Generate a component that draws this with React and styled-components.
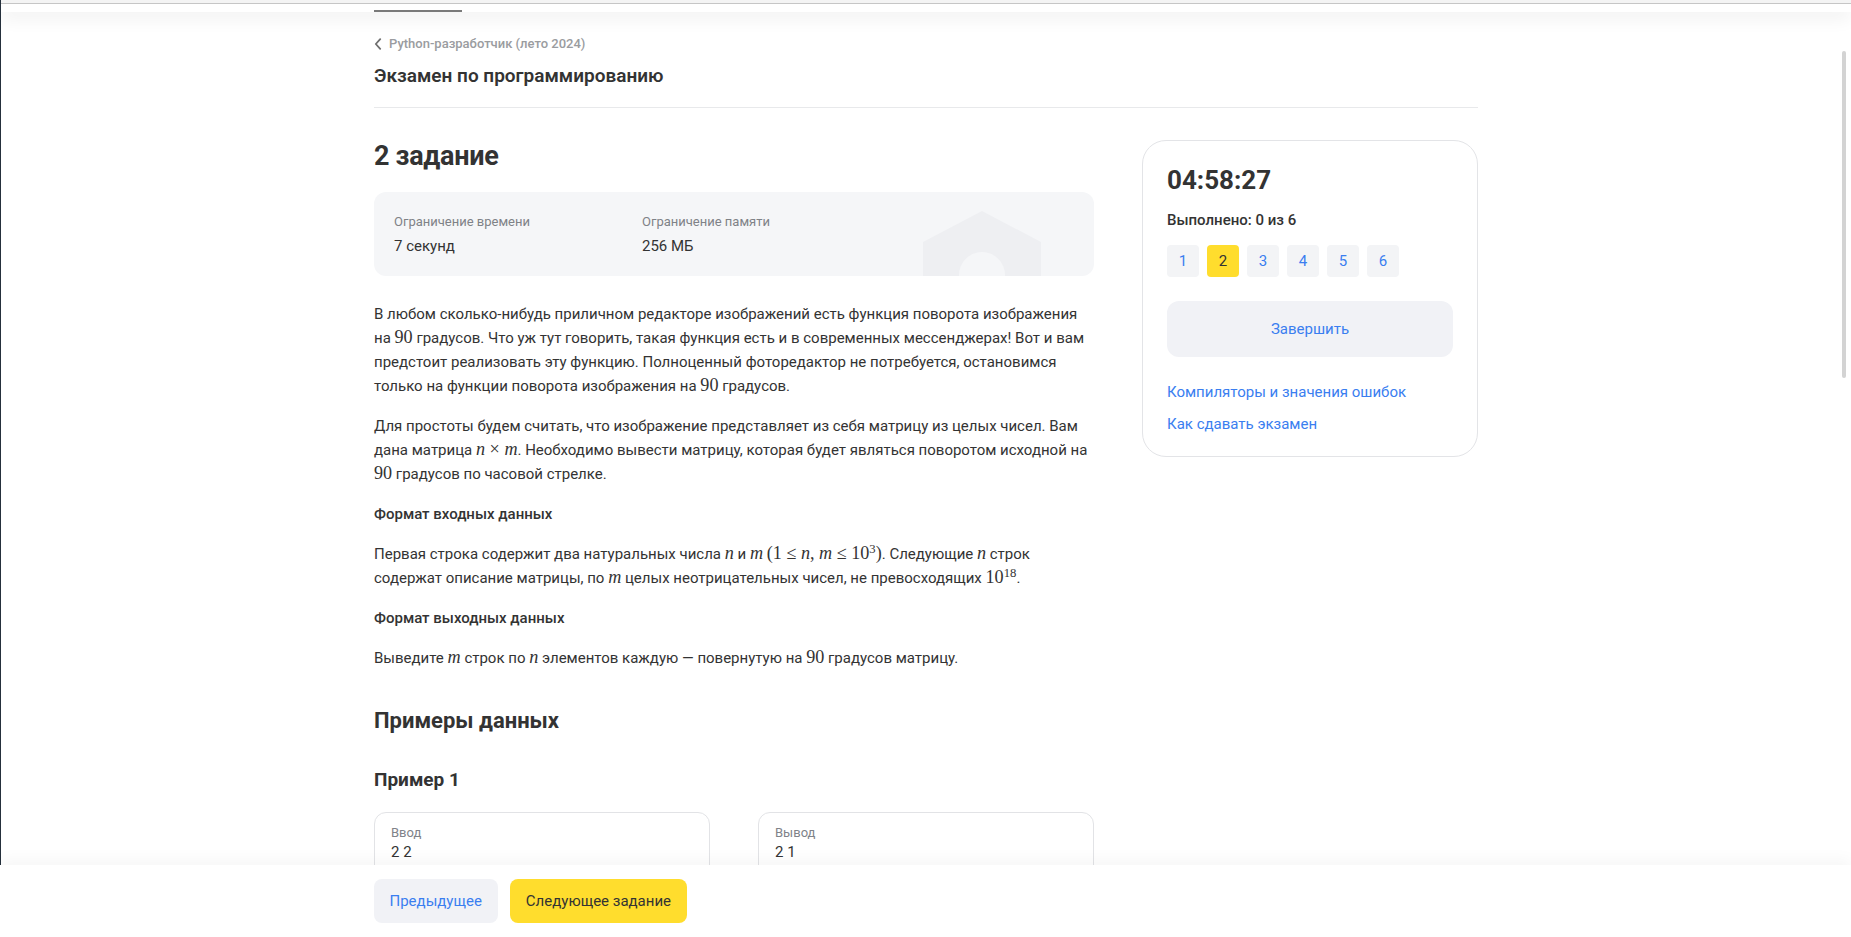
import React from "react";
import styled, { createGlobalStyle } from "styled-components";

const GlobalStyle = createGlobalStyle`
  html, body {
    margin: 0;
    padding: 0;
    height: 100%;
    overflow: hidden;
    background: #fff;
  }
  body {
    border-left: 1px solid #25303c;
    box-sizing: border-box;
    font-family: Roboto, "Noto Sans", Arial, sans-serif;
    color: #333;
  }
  * { box-sizing: border-box; }
`;

const BLUE = "#3a7ef0";

// Header, mostly scrolled away
const Header = styled.header`
  position: relative;
  z-index: 2;
  background: #fff;
  box-shadow: 0 6px 18px rgba(0, 0, 0, 0.07);
`;

const TopStrip = styled.div`
  height: 4px;
  background: #f4f4f4;
  border-bottom: 1px solid #c6c6c6;
`;

const HeaderInner = styled.div`
  width: 1104px;
  margin: 0 auto;
  height: 8px;
  display: flex;
  align-items: flex-end;
`;

const TabMark = styled.div`
  width: 88px;
  height: 2px;
  background: #7a7a7a;
`;

const Container = styled.div`
  width: 1104px;
  margin: 0 auto;
  padding-top: 22px;
`;

const Breadcrumb = styled.a`
  display: flex;
  align-items: center;
  gap: 7px;
  font-size: 13px;
  line-height: 20px;
  font-weight: 500;
  color: #9a9ca0;
  text-decoration: none;
`;

const PageTitle = styled.h1`
  margin: 10px 0 0;
  font-size: 19px;
  line-height: 24px;
  font-weight: 600;
  color: #333;
`;

const Divider = styled.hr`
  margin: 19px 0 0;
  border: none;
  border-top: 1px solid #e8e9eb;
`;

const Columns = styled.div`
  display: flex;
  gap: 48px;
  align-items: flex-start;
  padding-top: 30px;
`;

const Main = styled.main`
  flex: 0 0 720px;
`;

const TaskTitle = styled.h2`
  margin: 0 0 18px;
  font-size: 27px;
  line-height: 36px;
  font-weight: 700;
  letter-spacing: -0.3px;
  color: #333;
`;

const InfoCard = styled.div`
  position: relative;
  overflow: hidden;
  display: flex;
  background: #f5f6f8;
  border-radius: 12px;
  padding: 20px 20px 18px;
  margin-bottom: 26px;
`;

const InfoCol = styled.div`
  position: relative;
  z-index: 1;
  width: 248px;
  display: flex;
  flex-direction: column;
  gap: 2px;
`;

const InfoLabel = styled.span`
  font-size: 13px;
  line-height: 20px;
  color: #7f8287;
`;

const InfoValue = styled.span`
  font-size: 15px;
  line-height: 24px;
  color: #333;
`;

const Watermark = styled.svg`
  position: absolute;
  right: 53px;
  top: 19px;
`;

const Text = styled.p`
  margin: 0 0 16px;
  font-size: 15px;
  line-height: 24px;
  color: #333;
`;

const SubHeading = styled.h4`
  margin: 0 0 16px;
  font-size: 15px;
  line-height: 24px;
  font-weight: 500;
  color: #333;
`;

const Tex = styled.span`
  font-family: "Liberation Serif", "DejaVu Serif", serif;
  font-size: ${({ $inner }) => ($inner ? "1em" : "1.21em")};
  line-height: 1;
  font-style: ${({ $italic }) => ($italic ? "italic" : "normal")};
`;

const Sup = styled.sup`
  font-size: 0.7em;
  vertical-align: 0.5em;
  line-height: 0;
`;

const SectionTitle = styled.h2`
  margin: 37px 0 33px;
  font-size: 22px;
  line-height: 28px;
  font-weight: 700;
  color: #333;
`;

const ExampleTitle = styled.h3`
  margin: 0 0 20px;
  font-size: 19px;
  line-height: 24px;
  font-weight: 700;
  color: #333;
`;

const ExampleGrid = styled.div`
  display: grid;
  grid-template-columns: 1fr 1fr;
  gap: 48px;
`;

const ExampleBox = styled.div`
  border: 1px solid #e2e3e6;
  border-radius: 12px;
  padding: 11px 16px 16px;
  min-height: 120px;
`;

const ExampleLabel = styled.div`
  font-size: 13px;
  line-height: 18px;
  color: #808389;
`;

const ExampleValue = styled.pre`
  margin: 0;
  font-family: Roboto, Arial, sans-serif;
  font-size: 15px;
  line-height: 20px;
  color: #333;
`;

// Sidebar
const Sidebar = styled.aside`
  flex: 0 0 336px;
  margin-top: 2px;
  border: 1px solid #e3e4e7;
  border-radius: 24px;
  padding: 23px 24px 22px;
`;

const Timer = styled.div`
  font-size: 26px;
  line-height: 32px;
  font-weight: 700;
  color: #333;
`;

const Progress = styled.div`
  margin-top: 14px;
  font-size: 15px;
  line-height: 20px;
  font-weight: 500;
  color: #333;
`;

const TaskNav = styled.div`
  display: flex;
  gap: 8px;
  margin-top: 15px;
`;

const TaskButton = styled.button`
  width: 32px;
  height: 32px;
  border: none;
  border-radius: 4px;
  padding: 0;
  font-family: inherit;
  font-size: 15px;
  cursor: pointer;
  background: ${({ $active }) => ($active ? "#ffdd2d" : "#f3f4f6")};
  color: ${({ $active }) => ($active ? "#333" : BLUE)};
`;

const FinishButton = styled.button`
  display: block;
  width: 100%;
  height: 56px;
  margin-top: 24px;
  border: none;
  border-radius: 12px;
  background: #f1f2f6;
  color: ${BLUE};
  font-family: inherit;
  font-size: 15px;
  cursor: pointer;
`;

const Links = styled.div`
  display: flex;
  flex-direction: column;
  gap: 12px;
  margin-top: 25px;
`;

const SideLink = styled.a`
  font-size: 15px;
  line-height: 20px;
  color: ${BLUE};
  text-decoration: none;
`;

// Bottom bar
const BottomBar = styled.footer`
  position: fixed;
  left: 0;
  right: 0;
  bottom: 0;
  height: 72px;
  background: #fff;
  box-shadow: 0 -6px 14px rgba(0, 0, 0, 0.035);
  z-index: 3;
`;

const BarInner = styled.div`
  width: 1104px;
  height: 100%;
  margin: 0 auto;
  display: flex;
  align-items: center;
  gap: 12px;
`;

const BarButton = styled.button`
  height: 44px;
  padding: 0 16px;
  border: none;
  border-radius: 8px;
  font-family: inherit;
  font-size: 15px;
  cursor: pointer;
  background: ${({ $primary }) => ($primary ? "#ffdd2d" : "#f1f2f6")};
  color: ${({ $primary }) => ($primary ? "#333" : BLUE)};
`;

const ScrollThumb = styled.div`
  position: fixed;
  top: 51px;
  right: 5px;
  width: 4px;
  height: 327px;
  border-radius: 2px;
  background: #d3d3d3;
  z-index: 4;
`;

const n = <Tex $italic>n</Tex>;
const m = <Tex $italic>m</Tex>;
const ninety = <Tex>90</Tex>;

const tasks = [1, 2, 3, 4, 5, 6];

const App = () => (
  <>
    <GlobalStyle />
    <Header>
      <TopStrip />
      <HeaderInner>
        <TabMark />
      </HeaderInner>
    </Header>

    <Container>
      <Breadcrumb href="#">
        <svg width="8" height="12" viewBox="0 0 8 12">
          <path d="M6.2 1.2 L1.8 6 L6.2 10.8" fill="none" stroke="#707070" strokeWidth="1.8" strokeLinecap="round" strokeLinejoin="round" />
        </svg>
        Python-разработчик (лето 2024)
      </Breadcrumb>
      <PageTitle>Экзамен по программированию</PageTitle>
      <Divider />

      <Columns>
        <Main>
          <TaskTitle>2 задание</TaskTitle>

          <InfoCard>
            <InfoCol>
              <InfoLabel>Ограничение времени</InfoLabel>
              <InfoValue>7 секунд</InfoValue>
            </InfoCol>
            <InfoCol>
              <InfoLabel>Ограничение памяти</InfoLabel>
              <InfoValue>256 МБ</InfoValue>
            </InfoCol>
            <Watermark width="118" height="80" viewBox="0 0 118 80">
              <path d="M0 31 L59 0 L118 31 L118 80 L0 80 Z" fill="#eeeff2" />
              <circle cx="59" cy="64" r="23" fill="#f5f6f8" />
            </Watermark>
          </InfoCard>

          <Text>
            В любом сколько-нибудь приличном редакторе изображений есть функция поворота изображения
            на {ninety} градусов. Что уж тут говорить, такая функция есть и в современных мессенджерах! Вот и вам
            предстоит реализовать эту функцию. Полноценный фоторедактор не потребуется, остановимся
            только на функции поворота изображения на {ninety} градусов.
          </Text>
          <Text>
            Для простоты будем считать, что изображение представляет из себя матрицу из целых чисел. Вам
            дана матрица {n}<Tex> × </Tex>{m}. Необходимо вывести матрицу, которая будет являться поворотом исходной на{" "}
            {ninety} градусов по часовой стрелке.
          </Text>

          <SubHeading>Формат входных данных</SubHeading>
          <Text>
            Первая строка содержит два натуральных числа {n} и {m}{" "}
            <Tex>(1 ≤ <Tex $italic $inner>n</Tex>, <Tex $italic $inner>m</Tex> ≤ 10<Sup>3</Sup>)</Tex>. Следующие {n} строк
            содержат описание матрицы, по {m} целых неотрицательных чисел, не превосходящих{" "}
            <Tex>10<Sup>18</Sup></Tex>.
          </Text>

          <SubHeading>Формат выходных данных</SubHeading>
          <Text>
            Выведите {m} строк по {n} элементов каждую — повернутую на {ninety} градусов матрицу.
          </Text>

          <SectionTitle>Примеры данных</SectionTitle>
          <ExampleTitle>Пример 1</ExampleTitle>
          <ExampleGrid>
            <ExampleBox>
              <ExampleLabel>Ввод</ExampleLabel>
              <ExampleValue>{"2 2\n1 2\n3 4"}</ExampleValue>
            </ExampleBox>
            <ExampleBox>
              <ExampleLabel>Вывод</ExampleLabel>
              <ExampleValue>{"2 1\n4 3"}</ExampleValue>
            </ExampleBox>
          </ExampleGrid>
        </Main>

        <Sidebar>
          <Timer>04:58:27</Timer>
          <Progress>Выполнено: 0 из 6</Progress>
          <TaskNav>
            {tasks.map((t) => (
              <TaskButton key={t} $active={t === 2}>{t}</TaskButton>
            ))}
          </TaskNav>
          <FinishButton>Завершить</FinishButton>
          <Links>
            <SideLink href="#">Компиляторы и значения ошибок</SideLink>
            <SideLink href="#">Как сдавать экзамен</SideLink>
          </Links>
        </Sidebar>
      </Columns>
    </Container>

    <BottomBar>
      <BarInner>
        <BarButton>Предыдущее</BarButton>
        <BarButton $primary>Следующее задание</BarButton>
      </BarInner>
    </BottomBar>
    <ScrollThumb />
  </>
);

export default App;
